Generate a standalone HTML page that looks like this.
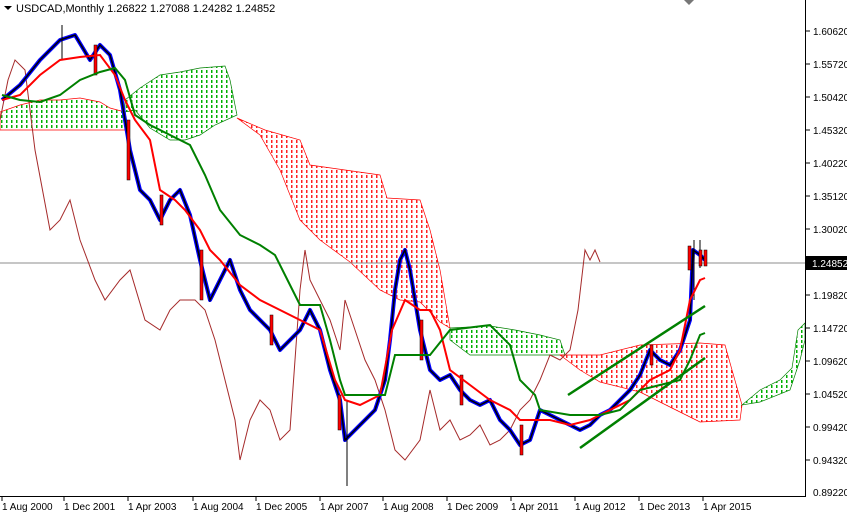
<!DOCTYPE html><html><head><style>body{margin:0;background:#fff}svg{display:block;font-family:"Liberation Sans",sans-serif}</style></head><body>
<svg width="847" height="514" xmlns="http://www.w3.org/2000/svg">
<defs>
<pattern id="gp" x="0" y="0" width="5" height="5" patternUnits="userSpaceOnUse"><rect x="1" y="0" width="1.5" height="3" fill="#00b000" shape-rendering="crispEdges"/></pattern>
<pattern id="rp" x="0" y="0" width="5" height="5" patternUnits="userSpaceOnUse"><rect x="1" y="0" width="1.5" height="3" fill="#ff2020" shape-rendering="crispEdges"/></pattern>
</defs>
<rect width="847" height="514" fill="#fff"/>
<!-- clouds -->
<polygon points="0,112 20,105 40,100 60,100 80,98 100,102 110,108 125,112 125,130 0,130" fill="url(#gp)" stroke="#ff0000" stroke-width="0.7"/>
<polygon points="125,100 140,88 160,75 180,72 200,68 225,66 230,80 237,115 215,125 200,135 185,140 170,140 150,128 135,110 125,112" fill="url(#gp)" stroke="#008000" stroke-width="0.7"/>
<polygon points="237,118 265,130 300,140 310,165 345,170 380,175 387,198 420,200 430,230 440,270 450,328 440,322 420,302 400,300 380,290 350,262 320,240 300,220 280,170 260,135" fill="url(#rp)" stroke="#ff0000" stroke-width="0.7"/>
<polygon points="450,328 490,326 515,330 540,335 560,340 565,355 520,355 470,355 450,340" fill="url(#gp)" stroke="#008000" stroke-width="0.7"/>
<polygon points="560,355 600,355 640,345 700,343 725,345 732,370 742,405 740,420 700,422 680,412 640,392 600,382 580,370" fill="url(#rp)" stroke="#ff0000" stroke-width="0.7"/>
<polygon points="742,405 760,390 780,380 792,368 798,330 805,323 805,340 800,360 790,390 760,402" fill="url(#gp)" stroke="#008000" stroke-width="0.7"/>
<line x1="0" y1="263" x2="805" y2="263" stroke="#8c8c8c"/>
<!-- chikou -->
<polyline fill="none" stroke="#a52a2a" stroke-width="1" points="0,120 8,80 15,60 25,70 35,150 50,230 60,220 70,200 80,240 95,280 105,300 120,280 130,270 145,320 160,330 170,310 180,300 195,300 205,310 215,340 225,380 235,420 240,460 250,420 260,400 270,410 280,440 290,430 300,290 305,250 310,280 320,300 330,320 340,350 345,300 355,330 365,360 375,380 385,410 395,450 405,460 420,440 430,390 440,430 450,420 460,440 470,435 480,425 490,445 500,440 510,430 520,410 530,400 540,380 550,355 560,360 570,350 578,310 585,250 590,260 595,250 600,262"/>
<!-- price -->
<polyline fill="none" stroke="#0000ff" stroke-width="4" stroke-linejoin="round" points="2,100 20,85 40,60 60,40 75,35 90,60 100,45 110,55 120,90 130,150 140,190 150,200 160,220 170,200 180,190 190,215 200,260 210,300 220,280 230,260 240,290 250,310 260,320 270,330 280,350 290,340 300,330 310,310 320,330 330,370 340,400 345,440 355,430 365,420 375,410 385,380 390,340 395,290 400,260 405,250 410,270 415,300 420,330 430,370 440,380 450,375 460,390 470,400 480,405 490,400 500,420 510,430 520,445 530,440 540,410 550,415 560,420 570,425 580,430 590,425 600,415 610,410 620,400 630,390 640,375 650,350 660,360 670,365 680,350 690,320 693,250 700,255 705,260"/>
<polyline fill="none" stroke="#000" stroke-width="1.5" points="2,100 20,85 40,60 60,40 75,35 90,60 100,45 110,55 120,90 130,150 140,190 150,200 160,220 170,200 180,190 190,215 200,260 210,300 220,280 230,260 240,290 250,310 260,320 270,330 280,350 290,340 300,330 310,310 320,330 330,370 340,400 345,440 355,430 365,420 375,410 385,380 390,340 395,290 400,260 405,250 410,270 415,300 420,330 430,370 440,380 450,375 460,390 470,400 480,405 490,400 500,420 510,430 520,445 530,440 540,410 550,415 560,420 570,425 580,430 590,425 600,415 610,410 620,400 630,390 640,375 650,350 660,360 670,365 680,350 690,320 693,250 700,255 705,260"/>
<g stroke="#000" stroke-width="1"><line x1="347" y1="400" x2="347" y2="486"/><line x1="694" y1="240" x2="694" y2="300"/><line x1="700" y1="240" x2="700" y2="268"/><line x1="62" y1="25" x2="62" y2="60"/></g>
<g fill="#ff0000" stroke="#000" stroke-width="0.5"><rect x="688" y="246" width="3" height="24"/><rect x="699" y="250" width="3" height="16"/><rect x="704" y="250" width="3" height="16"/><rect x="127" y="120" width="3" height="60"/><rect x="200" y="250" width="3" height="50"/><rect x="338" y="395" width="3" height="35"/><rect x="420" y="320" width="3" height="40"/><rect x="94" y="45" width="3" height="30"/><rect x="160" y="195" width="3" height="30"/><rect x="270" y="315" width="3" height="30"/><rect x="460" y="375" width="3" height="30"/><rect x="520" y="425" width="3" height="30"/><rect x="650" y="345" width="3" height="20"/></g>
<!-- tenkan -->
<polyline fill="none" stroke="#ff0000" stroke-width="2" points="2,100 20,95 40,75 60,60 80,57 100,55 115,75 125,100 135,120 150,140 160,190 175,200 185,210 200,230 210,250 220,260 240,285 260,300 280,310 300,320 320,330 335,380 345,400 360,405 380,395 392,330 405,300 420,310 430,310 440,330 450,370 470,385 490,400 510,410 520,420 535,420 550,420 570,425 590,420 610,410 630,400 650,380 670,370 680,350 690,300 700,280 705,278"/>
<!-- kijun -->
<polyline fill="none" stroke="#008000" stroke-width="2" points="2,95 20,100 40,102 60,95 80,80 100,72 115,68 125,80 135,115 150,125 170,135 190,145 205,175 220,210 240,235 260,245 275,255 290,285 300,305 320,305 330,340 340,380 345,395 385,395 395,355 430,355 450,330 490,325 510,345 520,380 535,395 540,410 570,415 600,415 620,410 640,390 660,385 680,380 690,360 700,335 705,333"/>
<line x1="568" y1="395" x2="705" y2="306" stroke="#008000" stroke-width="2.5"/>
<line x1="580" y1="448" x2="705" y2="358" stroke="#008000" stroke-width="2.5"/>
<line x1="805.5" y1="0" x2="805.5" y2="497" stroke="#000"/>
<line x1="0" y1="496.5" x2="806" y2="496.5" stroke="#000"/>
<polygon points="684,0 694,0 689,5" fill="#777"/>
<polygon points="4,6 12,6 8,10" fill="#000"/>
<text x="16" y="12" font-size="11">USDCAD,Monthly  1.26822 1.27088 1.24282 1.24852</text>
<g font-size="10" fill="#000">
<text x="813" y="35">1.60620</text><text x="813" y="68">1.55720</text><text x="813" y="101">1.50420</text><text x="813" y="134">1.45320</text><text x="813" y="167">1.40220</text><text x="813" y="200">1.35120</text><text x="813" y="233">1.30020</text><text x="813" y="299">1.19820</text><text x="813" y="332">1.14720</text><text x="813" y="365">1.09620</text><text x="813" y="398">1.04520</text><text x="813" y="431">0.99420</text><text x="813" y="464">0.94320</text><text x="813" y="496">0.89220</text>
</g>
<g stroke="#000"><line x1="806" y1="31" x2="810" y2="31"/><line x1="806" y1="64" x2="810" y2="64"/><line x1="806" y1="97" x2="810" y2="97"/><line x1="806" y1="130" x2="810" y2="130"/><line x1="806" y1="163" x2="810" y2="163"/><line x1="806" y1="196" x2="810" y2="196"/><line x1="806" y1="229" x2="810" y2="229"/><line x1="806" y1="295" x2="810" y2="295"/><line x1="806" y1="328" x2="810" y2="328"/><line x1="806" y1="361" x2="810" y2="361"/><line x1="806" y1="394" x2="810" y2="394"/><line x1="806" y1="427" x2="810" y2="427"/><line x1="806" y1="460" x2="810" y2="460"/></g>
<rect x="806" y="256" width="41" height="14" fill="#000"/>
<text x="812" y="267" font-size="10" fill="#fff">1.24852</text>
<g font-size="10" fill="#000">
<text x="2" y="510">1 Aug 2000</text><text x="64" y="510">1 Dec 2001</text><text x="128" y="510">1 Apr 2003</text><text x="193" y="510">1 Aug 2004</text><text x="256" y="510">1 Dec 2005</text><text x="320" y="510">1 Apr 2007</text><text x="383" y="510">1 Aug 2008</text><text x="447" y="510">1 Dec 2009</text><text x="511" y="510">1 Apr 2011</text><text x="575" y="510">1 Aug 2012</text><text x="639" y="510">1 Dec 2013</text><text x="703" y="510">1 Apr 2015</text>
</g>
<g stroke="#000"><line x1="2" y1="497" x2="2" y2="501"/><line x1="64" y1="497" x2="64" y2="501"/><line x1="128" y1="497" x2="128" y2="501"/><line x1="193" y1="497" x2="193" y2="501"/><line x1="256" y1="497" x2="256" y2="501"/><line x1="320" y1="497" x2="320" y2="501"/><line x1="383" y1="497" x2="383" y2="501"/><line x1="447" y1="497" x2="447" y2="501"/><line x1="511" y1="497" x2="511" y2="501"/><line x1="575" y1="497" x2="575" y2="501"/><line x1="639" y1="497" x2="639" y2="501"/><line x1="703" y1="497" x2="703" y2="501"/></g>
</svg>
</body></html>
